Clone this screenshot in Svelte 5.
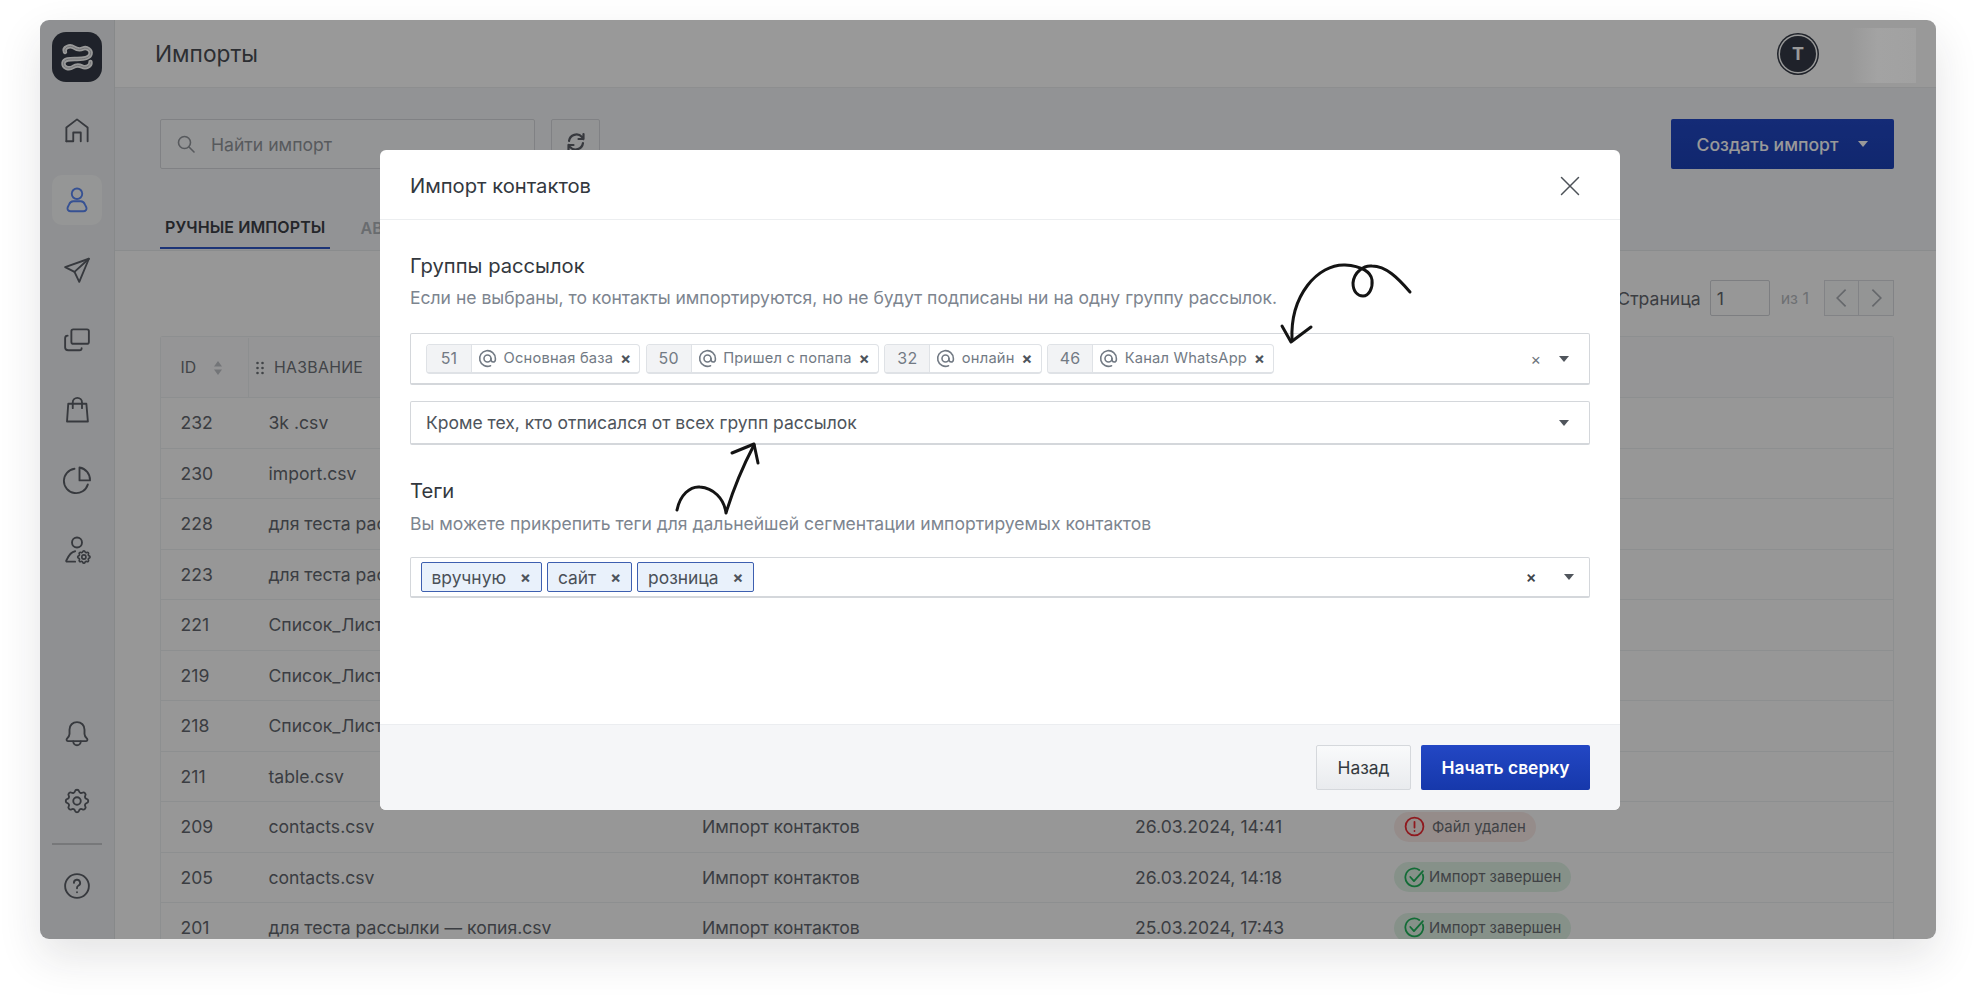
<script>
	const gearPath =
		'M10.325 4.317c.426-1.756 2.924-1.756 3.35 0a1.724 1.724 0 0 0 2.573 1.066c1.543-.94 3.31.826 2.37 2.37a1.724 1.724 0 0 0 1.065 2.572c1.756.426 1.756 2.924 0 3.35a1.724 1.724 0 0 0-1.066 2.573c.94 1.543-.826 3.31-2.37 2.37a1.724 1.724 0 0 0-2.572 1.065c-.426 1.756-2.924 1.756-3.35 0a1.724 1.724 0 0 0-2.573-1.066c-1.543.94-3.31-.826-2.37-2.37a1.724 1.724 0 0 0-1.065-2.572c-1.756-.426-1.756-2.924 0-3.35a1.724 1.724 0 0 0 1.066-2.573c-.94-1.543.826-3.31 2.37-2.37 1 .608 2.296.07 2.572-1.065z';
	const logoPath =
		'M13 20C11 15 18 13 22 15.500C25 17.500 28 18 31 16.500C35 15 39.500 18 38.500 22C37.500 26.500 31 27 25 27C19 27 12 26.500 11.500 31C11 36 17 37.500 21 35C24 33 27 33 30 34.500C34 36.500 39 34 38.500 30';

	const navTop = [
		{ paths: ['M3.5 21V10L12 3.5 20.5 10V21', 'M3.5 21H9V14H15V21'] },
		{
			active: true,
			paths: [
				'M16.2 7a4.2 4.2 0 1 1-8.4 0 4.2 4.2 0 0 1 8.4 0z',
				'M7 21h10c2 0 3-1.5 2.5-3l-1.2-2.5C17.5 13.5 16.5 13 15 13H9c-1.5 0-2.5.5-3.3 2.5L4.5 18C4 19.5 5 21 7 21z'
			]
		},
		{ paths: ['M21.5 3 2.5 9.7l7.5 3.8 3.8 8z', 'M10 13.5 21.5 3'] },
		{
			paths: [
				'M9 3.5h11a1.5 1.5 0 0 1 1.5 1.5v8.5A1.5 1.5 0 0 1 20 15H9a1.5 1.5 0 0 1-1.5-1.5V5A1.5 1.5 0 0 1 9 3.5z',
				'M4.5 8.5c-1.5 0-2 1-2 2V18c0 1.5 1 2.2 2.5 2.2h9c1 0 1.7-.7 1.7-1.7'
			]
		},
		{ paths: ['M5 7h14.5l1.2 14.2H4z', 'M8.6 10.5V6a3.7 3.7 0 0 1 7.4 0v4.5'] },
		{ paths: ['M10 3a9.8 9.8 0 1 0 10.7 12.5', 'M14 2a10 10 0 0 1 8.4 10.3H14z'] },
		{
			paths: [
				'M16 6a4 4 0 1 1-8 0 4 4 0 0 1 8 0z',
				'M10.5 13C7 13.5 5 17 3.4 20.5c-.2.5.2.8.6.8h6.5'
			],
			gear: true
		}
	];

	const rows = [
		{ id: 232, name: '3k .csv' },
		{ id: 230, name: 'import.csv' },
		{ id: 228, name: 'для теста рас' },
		{ id: 223, name: 'для теста рас' },
		{ id: 221, name: 'Список_Лист' },
		{ id: 219, name: 'Список_Лист' },
		{ id: 218, name: 'Список_Лист' },
		{ id: 211, name: 'table.csv' },
		{ id: 209, name: 'contacts.csv', type: 'Импорт контактов', date: '26.03.2024, 14:41', status: 'error' },
		{ id: 205, name: 'contacts.csv', type: 'Импорт контактов', date: '26.03.2024, 14:18', status: 'ok' },
		{ id: 201, name: 'для теста рассылки — копия.csv', type: 'Импорт контактов', date: '25.03.2024, 17:43', status: 'ok' }
	];

	const groups = [
		{ id: 51, name: 'Основная база' },
		{ id: 50, name: 'Пришел с попапа' },
		{ id: 32, name: 'онлайн' },
		{ id: 46, name: 'Канал WhatsApp' }
	];

	const tags = ['вручную', 'сайт', 'розница'];
</script>

<div class="window">
	<aside class="sidebar">
		<div class="logo">
			<svg viewBox="0 0 50 50" width="50" height="50" fill="none" stroke-linecap="round">
				<path class="squiggle" d={logoPath} />
				<path class="squiggle-in" d={logoPath} />
			</svg>
		</div>
		<nav class="nav">
			{#each navTop as item}
				<div class="nav-item" class:active={item.active}>
					<svg viewBox="0 0 24 24" width="30" height="30" fill="none" stroke="currentColor" stroke-width="1.5" stroke-linecap="round" stroke-linejoin="round">
						{#each item.paths as d}<path {d} />{/each}
						{#if item.gear}
							<g transform="translate(10.9 11) scale(.55)">
								<path d={gearPath} stroke-width="2.4" />
								<path d="M15 12a3 3 0 1 1-6 0 3 3 0 0 1 6 0z" stroke-width="2.4" />
							</g>
						{/if}
					</svg>
				</div>
			{/each}
		</nav>
		<div class="nav-bottom">
			<div class="nav-item small">
				<svg viewBox="0 0 24 24" width="30" height="30" fill="none" stroke="currentColor" stroke-width="1.5" stroke-linecap="round" stroke-linejoin="round">
					<path d="M12 2.5c-3.5 0-6 2.5-6 6V12c0 1.5-1 2.7-2 3.7-.7.9-.2 2 1 2h14c1.200 0 1.700-1.100 1-2-1-1-2-2.200-2-3.700V8.500c0-3.500-2.500-6-6-6z" />
					<path d="M9 18a3 3 0 0 0 6 0" />
				</svg>
			</div>
			<div class="nav-item small">
				<svg viewBox="0 0 24 24" width="30" height="30" fill="none" stroke="currentColor" stroke-width="1.5" stroke-linecap="round" stroke-linejoin="round">
					<path d={gearPath} />
					<path d="M15 12a3 3 0 1 1-6 0 3 3 0 0 1 6 0z" />
				</svg>
			</div>
			<div class="nav-divider"></div>
			<div class="nav-item small">
				<svg viewBox="0 0 24 24" width="30" height="30" fill="none" stroke="currentColor" stroke-width="1.500" stroke-linecap="round" stroke-linejoin="round">
					<path d="M21.500 12a9.500 9.500 0 1 1-19 0 9.500 9.500 0 0 1 19 0z" />
					<path d="M9.500 9.500a2.500 2.500 0 1 1 3.500 2.300c-.7.400-1 1-1 1.700v.300" />
					<path d="M12 17v.01" />
				</svg>
			</div>
		</div>
	</aside>

	<main class="main">
		<header class="topbar">
			<div class="page-title">Импорты</div>
			<div class="user">
				<div class="avatar">T</div>
				<div class="user-name"></div>
			</div>
		</header>

		<section class="toolbar">
			<div class="toolbar-row">
				<div class="search">
					<svg viewBox="0 0 20 20" width="20" height="20" fill="none" stroke="currentColor" stroke-width="1.600" stroke-linecap="round">
						<path d="M14.500 8.500a6 6 0 1 1-12 0 6 6 0 0 1 12 0z" />
						<path d="M13 13l5 5" />
					</svg>
					<span>Найти импорт</span>
				</div>
				<button class="refresh" aria-label="Обновить">
					<svg viewBox="0 0 24 24" width="24" height="24" fill="none" stroke="currentColor" stroke-width="2.200" stroke-linecap="round" stroke-linejoin="round">
						<path d="M5 11a7.500 7.500 0 0 1 13-4l1.500 2M19.500 4v5h-5" />
						<path d="M19 13a7.500 7.500 0 0 1-13 4l-1.500-2M4.500 20v-5h5" />
					</svg>
				</button>
				<button class="create">
					Создать импорт
					<span class="caret light"></span>
				</button>
			</div>
			<div class="tabs">
				<div class="tab active">Ручные импорты</div>
				<div class="tab">Ав</div>
			</div>
		</section>

		<section class="content">
			<div class="pager">
				<span class="pager-label">Страница</span>
				<div class="pager-input">1</div>
				<span class="pager-total">из 1</span>
				<div class="pager-btns">
					<button aria-label="Назад">
						<svg viewBox="0 0 20 20" width="24" height="24" fill="none" stroke="currentColor" stroke-width="1.400"><path d="M13 3l-7 7 7 7" /></svg>
					</button>
					<button aria-label="Вперёд">
						<svg viewBox="0 0 20 20" width="24" height="24" fill="none" stroke="currentColor" stroke-width="1.400"><path d="M7 3l7 7-7 7" /></svg>
					</button>
				</div>
			</div>

			<div class="table">
				<div class="row head">
					<div class="cell id-head">
						ID
						<svg viewBox="0 0 10 14" width="10" height="14" fill="currentColor"><path d="M5 0l4 5.500H1zM5 14l4-5.500H1z" /></svg>
					</div>
					<div class="cell name-head">
						<svg viewBox="0 0 10 16" width="10" height="16" fill="currentColor">
							<circle cx="2.500" cy="3" r="1.300" /><circle cx="7.500" cy="3" r="1.300" />
							<circle cx="2.500" cy="8" r="1.300" /><circle cx="7.500" cy="8" r="1.300" />
							<circle cx="2.500" cy="13" r="1.300" /><circle cx="7.500" cy="13" r="1.300" />
						</svg>
						НАЗВАНИЕ
					</div>
					<div class="cell"></div>
					<div class="cell"></div>
					<div class="cell"></div>
				</div>
				{#each rows as row}
					<div class="row">
						<div class="cell">{row.id}</div>
						<div class="cell">{row.name}</div>
						<div class="cell">{row.type ?? ''}</div>
						<div class="cell">{row.date ?? ''}</div>
						<div class="cell">
							{#if row.status === 'error'}
								<span class="pill error">
									<svg viewBox="0 0 20 20" width="21" height="21" fill="none" stroke="currentColor" stroke-width="1.700" stroke-linecap="round">
										<path d="M18.500 10a8.500 8.500 0 1 1-17 0 8.500 8.500 0 0 1 17 0z" />
										<path d="M10 5.500v5.500M10 14.300v.1" />
									</svg>
									Файл удален
								</span>
							{:else if row.status === 'ok'}
								<span class="pill ok">
									<svg viewBox="0 0 20 20" width="21" height="21" fill="none" stroke="currentColor" stroke-width="1.700" stroke-linecap="round" stroke-linejoin="round">
										<path d="M17.800 7a8.500 8.500 0 1 1-3.300-4.200" />
										<path d="M6 9.500l3.500 4L18 4" />
									</svg>
									Импорт завершен
								</span>
							{/if}
						</div>
					</div>
				{/each}
			</div>
		</section>
	</main>

	<div class="overlay">
		<div class="dialog">
			<div class="dialog-head">
				<div class="dialog-title">Импорт контактов</div>
				<button class="close" aria-label="Закрыть">
					<svg viewBox="0 0 20 20" width="20" height="20" fill="none" stroke="currentColor" stroke-width="1.500" stroke-linecap="round"><path d="M1.500 1.500l17 17M18.500 1.500l-17 17" /></svg>
				</button>
			</div>

			<div class="dialog-body">
				<h3>Группы рассылок</h3>
				<p>Если не выбраны, то контакты импортируются, но не будут подписаны ни на одну группу рассылок.</p>

				<div class="select multi">
					<div class="chips">
						{#each groups as g}
							<div class="group-chip">
								<span class="group-id">{g.id}</span>
								<span class="group-name">
									<svg viewBox="0 0 24 24" width="21" height="21" fill="none" stroke="currentColor" stroke-width="1.800" stroke-linecap="round" stroke-linejoin="round">
										<path d="M16 12a4 4 0 1 1-8 0 4 4 0 0 1 8 0z" />
										<path d="M16 12v1.500a2.500 2.500 0 0 0 5 0V12a9 9 0 1 0-5.500 8.280" />
									</svg>
									<span class="group-text">{g.name}</span>
									<span class="remove">×</span>
								</span>
							</div>
						{/each}
					</div>
					<span class="clear">×</span>
					<span class="caret"></span>
				</div>

				<div class="select single">
					<span class="select-value">Кроме тех, кто отписался от всех групп рассылок</span>
					<span class="caret"></span>
				</div>

				<h3 class="tags-title">Теги</h3>
				<p class="tags-desc">Вы можете прикрепить теги для дальнейшей сегментации импортируемых контактов</p>

				<div class="select tags">
					<div class="chips tight">
						{#each tags as tag}
							<div class="tag-chip">
								{tag}
								<span class="remove">×</span>
							</div>
						{/each}
					</div>
					<span class="clear dark">×</span>
					<span class="caret"></span>
				</div>
			</div>

			<div class="dialog-foot">
				<button class="btn ghost">Назад</button>
				<button class="btn primary">Начать сверку</button>
			</div>

			<svg class="scribbles" viewBox="380 150 1240 660" fill="none" stroke="#141414" stroke-width="3" stroke-linecap="round" stroke-linejoin="round">
				<path d="M1410 292C1398 278 1386 266 1372 266C1364 265 1354 272 1353 283C1353 292 1358 296 1363 296C1369 296 1373 288 1372 280C1371 272 1362 266 1345 265C1318 264 1290 295 1292 340" />
				<path d="M1282 326L1291 342L1311 327" />
				<path d="M677 510C680 495 690 486 700 487C713 488 724 498 726 513C733 490 742 468 754 445" />
				<path d="M732 453L754 444L758 463" />
			</svg>
		</div>
	</div>
</div>

<style>
	:global(body) {
		margin: 0;
		background: #fff;
		font-family: Inter, 'Noto Sans', sans-serif;
	}
	button {
		font-family: inherit;
		padding: 0;
		cursor: pointer;
	}

	.window {
		position: relative;
		display: flex;
		width: 1896px;
		height: 919px;
		margin: 20px 40px 60px;
		border-radius: 9px;
		overflow: hidden;
		box-shadow: 0 18px 44px rgba(30, 34, 40, 0.12);
		background: #fff;
	}

	.sidebar {
		width: 75px;
		flex: none;
		display: flex;
		flex-direction: column;
		align-items: center;
		padding: 12px 0 32px;
		box-sizing: border-box;
		background: #eff1f3;
		border-right: 1px solid #e2e4e7;
		color: #5c6068;
	}
	.logo {
		width: 50px;
		height: 50px;
		border-radius: 14px;
		background: #343a46;
	}
	.squiggle {
		stroke: #fff;
		stroke-width: 4.400;
	}
	.squiggle-in {
		stroke: #a5a7ad;
		stroke-width: 0.700;
	}
	.nav {
		display: flex;
		flex-direction: column;
		gap: 20px;
		margin-top: 23px;
	}
	.nav-item {
		width: 50px;
		height: 50px;
		display: flex;
		align-items: center;
		justify-content: center;
		border-radius: 10px;
	}
	.nav-item.active {
		background: #f9fafb;
		color: #5b88f5;
	}
	.nav-item.small {
		height: 42px;
	}
	.nav-item.small + .nav-item.small {
		margin-top: 25px;
	}
	.nav-bottom {
		margin-top: auto;
		display: flex;
		flex-direction: column;
		align-items: center;
	}
	.nav-divider {
		width: 50px;
		height: 2px;
		margin: 21px 0 20px;
		background: #c6c8cc;
	}

	.main {
		flex: 1;
		min-width: 0;
		display: flex;
		flex-direction: column;
	}
	.topbar {
		height: 68px;
		flex: none;
		box-sizing: border-box;
		display: flex;
		align-items: center;
		justify-content: space-between;
		padding: 0 20px 0 40px;
		background: #fff;
		border-bottom: 1px solid #ebedef;
	}
	.page-title {
		font-size: 22.700px;
		color: #4a4e54;
	}
	.user {
		display: flex;
		align-items: center;
		gap: 9px;
	}
	.avatar {
		width: 36px;
		height: 36px;
		border-radius: 50%;
		background: #343a46;
		box-shadow: 0 0 0 1.500px #fff, 0 0 0 3px #343a46;
		color: #fff;
		display: flex;
		align-items: center;
		justify-content: center;
		font-weight: 700;
		font-size: 18px;
	}
	/* blurred-out name, sits above the dim layer because it is lighter than it */
	.user-name {
		position: relative;
		z-index: 2;
		width: 91px;
		height: 55px;
		margin-top: 3px;
		background: linear-gradient(90deg, #999 0%, #999 28%, #a3a3a3 58%, #a1a1a1 100%);
	}

	.toolbar {
		height: 163px;
		flex: none;
		box-sizing: border-box;
		padding: 31px 42px 0 45px;
		display: flex;
		flex-direction: column;
		background: #f4f6f8;
		border-bottom: 1px solid #e7e9ec;
	}
	.toolbar-row {
		display: flex;
		align-items: flex-start;
	}
	.search {
		width: 375px;
		height: 50px;
		box-sizing: border-box;
		display: flex;
		align-items: center;
		gap: 15px;
		padding-left: 15px;
		background: #f7f8fa;
		border: 1px solid #d5d8dc;
		color: #92969c;
		font-size: 17.600px;
		border-radius: 2px;
	}
	.refresh {
		width: 49px;
		height: 50px;
		margin-left: 16px;
		background: #f4f5f7;
		border: 1px solid #d5d8dc;
		color: #5c6068;
		border-radius: 2px;
		display: flex;
		align-items: center;
		justify-content: center;
		padding-bottom: 4px;
	}
	.create {
		margin-left: auto;
		width: 223px;
		height: 50px;
		display: flex;
		align-items: center;
		justify-content: center;
		gap: 20px;
		border: none;
		border-radius: 2px;
		background: linear-gradient(#2248c6, #1c42b8);
		color: #fff;
		font-size: 17.600px;
		font-weight: 500;
	}
	.tabs {
		margin-top: auto;
		display: flex;
		gap: 25px;
	}
	.tab {
		padding: 0 5px;
		height: 42px;
		box-sizing: border-box;
		font-size: 16px;
		font-weight: 600;
		text-transform: uppercase;
		letter-spacing: 0.1px;
		color: #b0b4ba;
		display: flex;
		align-items: center;
		margin-bottom: 1px;
	}
	.tab.active {
		color: #3c4046;
		border-bottom: 2.500px solid #2f57c7;
		margin-bottom: -1px;
	}

	.content {
		flex: 1;
		min-height: 0;
		padding: 29px 42px 0 45px;
		background: #fcfcfc;
	}
	.pager {
		display: flex;
		align-items: center;
		justify-content: flex-end;
		height: 36px;
		font-size: 17.600px;
		color: #63676e;
	}
	.pager-input {
		width: 60px;
		height: 36px;
		box-sizing: border-box;
		border: 1px solid #d0d3d7;
		border-radius: 2px;
		margin-left: 9px;
		padding-left: 6px;
		display: flex;
		align-items: center;
	}
	.pager-total {
		margin: 0 15px 0 11px;
		font-size: 16px;
		color: #b7bbc0;
	}
	.pager-btns {
		display: flex;
		height: 36px;
	}
	.pager-btns button {
		width: 35px;
		background: #f7f8f9;
		border: 1px solid #d9dbdf;
		color: #a9adb3;
		display: flex;
		align-items: center;
		justify-content: center;
	}
	.pager-btns button + button {
		border-left: none;
	}

	.table {
		margin-top: 20px;
		border: 1px solid #eceef0;
		border-bottom: none;
		border-radius: 3px 3px 0 0;
		color: #63676e;
		font-size: 17.600px;
	}
	.row {
		display: grid;
		grid-template-columns: 88px 433.500px 433px 259px 1fr;
		height: 50.500px;
		box-sizing: border-box;
		border-bottom: 1px solid #eceef0;
	}
	.row.head {
		height: 61px;
		padding-top: 1px;
		background: #f8f9fa;
		font-size: 15.800px;
		color: #6e7278;
	}
	.cell {
		display: flex;
		align-items: center;
		padding-left: 19.500px;
		white-space: nowrap;
	}
	.id-head {
		gap: 17px;
		border-right: 1px solid #eceef0;
	}
	.id-head svg {
		color: #c0c3c8;
	}
	.name-head {
		padding-left: 6px;
		gap: 9px;
		letter-spacing: 0.300px;
	}
	.pill {
		display: inline-flex;
		align-items: center;
		height: 30px;
		padding: 0 10px;
		gap: 4px;
		border-radius: 15px;
		font-size: 14.900px;
	}
	.pill.error {
		background: #f8e9e7;
		color: #6b6e73;
	}
	.pill.error svg {
		color: #ee2b33;
		margin-right: 3px;
	}
	.pill.ok {
		background: #dff2e5;
		color: #6b6e73;
	}
	.pill.ok svg {
		color: #20b45b;
	}

	.overlay {
		position: absolute;
		inset: 0;
		background: rgba(0, 0, 0, 0.4);
		padding: 130px 0 0 340px;
		box-sizing: border-box;
	}
	.dialog {
		position: relative;
		width: 1240px;
		height: 660px;
		background: #fff;
		border-radius: 6px;
		display: flex;
		flex-direction: column;
		color: #343a40;
	}
	.dialog-head {
		height: 70px;
		flex: none;
		box-sizing: border-box;
		display: flex;
		align-items: center;
		justify-content: space-between;
		padding: 2px 40px 0 30px;
		border-bottom: 1px solid #eceef0;
	}
	.dialog-title {
		font-size: 20.200px;
		color: #33383e;
	}
	.close {
		background: none;
		border: none;
		color: #4d5258;
		display: flex;
	}
	.dialog-body {
		flex: 1;
		padding: 34px 30px 0 30px;
	}
	h3 {
		margin: 0;
		font-weight: 400;
		font-size: 20.200px;
		line-height: 24px;
		color: #33383e;
	}
	p {
		margin: 8px 0 0;
		font-size: 17.520px;
		line-height: 24px;
		color: #7d858f;
	}
	.select {
		position: relative;
		box-sizing: border-box;
		display: flex;
		align-items: center;
		border: 1px solid #d4d7db;
		border-bottom-width: 2px;
		border-radius: 2px;
		font-size: 17.500px;
	}
	.multi {
		height: 52px;
		margin-top: 23px;
		padding: 0 19px 0 15px;
	}
	.single {
		height: 44px;
		margin-top: 16px;
		padding: 0 19px 0 15px;
		color: #4e545b;
	}
	.tags-title {
		margin-top: 34px;
	}
	.tags-desc {
		margin-top: 9px;
	}
	.tags {
		height: 41px;
		margin-top: 21px;
		padding: 0 14px 0 9.500px;
	}
	.chips {
		flex: 1;
		display: flex;
		gap: 5.500px;
	}
	.chips.tight {
		gap: 5px;
	}
	.group-chip {
		display: flex;
		height: 30px;
		box-sizing: border-box;
		border: 1px solid #dfe2e6;
		border-bottom-width: 2px;
		border-radius: 4px;
		overflow: hidden;
		font-size: 14.700px;
		letter-spacing: 0.200px;
		color: #727a84;
	}
	.group-id {
		width: 44px;
		display: flex;
		align-items: center;
		justify-content: center;
		background: #f2f3f5;
		border-right: 1px solid #dfe2e6;
		font-size: 16px;
	}
	.group-name {
		display: flex;
		align-items: center;
		padding: 0 8px 0 5px;
	}
	.group-text {
		margin-left: 5.500px;
	}
	.remove {
		font-weight: 700;
		font-size: 16px;
		color: #4e545b;
		margin-left: 7px;
		line-height: 1;
	}
	.tag-chip {
		height: 30px;
		box-sizing: border-box;
		display: flex;
		align-items: center;
		padding: 0 10px;
		background: #e9f1fb;
		border: 1px solid #3d5fb0;
		border-bottom-width: 1.500px;
		border-radius: 2px;
		font-size: 17.400px;
		color: #4a5058;
	}
	.tag-chip .remove {
		margin-left: 14px;
	}
	.clear {
		font-size: 16px;
		color: #6f757d;
		margin-right: 18px;
	}
	.clear.dark {
		color: #3f444a;
		font-weight: 600;
		margin-right: 27.500px;
	}
	.select-value {
		flex: 1;
	}
	.caret {
		width: 0;
		height: 0;
		border-left: 5.500px solid transparent;
		border-right: 5.500px solid transparent;
		border-top: 6px solid #50555c;
		margin-right: 1px;
	}
	.caret.light {
		border-top-color: #fff;
		margin: 0;
	}
	.dialog-foot {
		height: 86px;
		flex: none;
		box-sizing: border-box;
		display: flex;
		align-items: center;
		justify-content: flex-end;
		gap: 10px;
		padding: 0 30px 0 0;
		background: #f5f6f8;
		border-top: 1px solid #ebedf0;
		border-radius: 0 0 6px 6px;
	}
	.btn {
		height: 45px;
		font-size: 17.400px;
		border-radius: 2px;
	}
	.ghost {
		width: 95px;
		background: linear-gradient(#f9fafb, #e9ebee);
		border: 1px solid #d5d8dc;
		color: #343a40;
	}
	.primary {
		width: 169px;
		background: linear-gradient(#2347c4, #1638ab);
		border: none;
		color: #fff;
		font-weight: 600;
	}
	.scribbles {
		position: absolute;
		inset: 0;
		width: 1240px;
		height: 660px;
		overflow: visible;
		pointer-events: none;
	}
</style>
